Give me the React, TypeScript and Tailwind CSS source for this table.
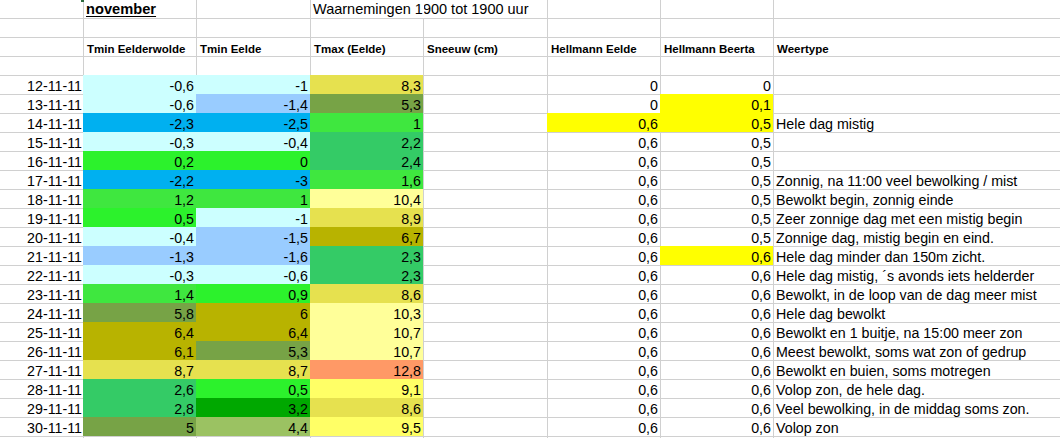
import React from 'react';

type Row = {
  date: string;
  b: string;
  c: string;
  d: string;
  f: string;
  g: string;
  h?: string;
  fYellow?: boolean;
  gYellow?: boolean;
};

const rows: Row[] = [
  { date: '12-11-11', b: '-0,6', c: '-1', d: '8,3', f: '0', g: '0' },
  { date: '13-11-11', b: '-0,6', c: '-1,4', d: '5,3', f: '0', g: '0,1', gYellow: true },
  { date: '14-11-11', b: '-2,3', c: '-2,5', d: '1', f: '0,6', g: '0,5', fYellow: true, gYellow: true, h: 'Hele dag mistig' },
  { date: '15-11-11', b: '-0,3', c: '-0,4', d: '2,2', f: '0,6', g: '0,5' },
  { date: '16-11-11', b: '0,2', c: '0', d: '2,4', f: '0,6', g: '0,5' },
  { date: '17-11-11', b: '-2,2', c: '-3', d: '1,6', f: '0,6', g: '0,5', h: 'Zonnig, na 11:00 veel bewolking / mist' },
  { date: '18-11-11', b: '1,2', c: '1', d: '10,4', f: '0,6', g: '0,5', h: 'Bewolkt begin, zonnig einde' },
  { date: '19-11-11', b: '0,5', c: '-1', d: '8,9', f: '0,6', g: '0,5', h: 'Zeer zonnige dag met een mistig begin' },
  { date: '20-11-11', b: '-0,4', c: '-1,5', d: '6,7', f: '0,6', g: '0,5', h: 'Zonnige dag, mistig begin en eind.' },
  { date: '21-11-11', b: '-1,3', c: '-1,6', d: '2,3', f: '0,6', g: '0,6', gYellow: true, h: 'Hele dag minder dan 150m zicht.' },
  { date: '22-11-11', b: '-0,3', c: '-0,6', d: '2,3', f: '0,6', g: '0,6', h: 'Hele dag mistig, \u00b4s avonds iets helderder' },
  { date: '23-11-11', b: '1,4', c: '0,9', d: '8,6', f: '0,6', g: '0,6', h: 'Bewolkt, in de loop van de dag meer mist' },
  { date: '24-11-11', b: '5,8', c: '6', d: '10,3', f: '0,6', g: '0,6', h: 'Hele dag bewolkt' },
  { date: '25-11-11', b: '6,4', c: '6,4', d: '10,7', f: '0,6', g: '0,6', h: 'Bewolkt en 1 buitje, na 15:00 meer zon' },
  { date: '26-11-11', b: '6,1', c: '5,3', d: '10,7', f: '0,6', g: '0,6', h: 'Meest bewolkt, soms wat zon of gedrup' },
  { date: '27-11-11', b: '8,7', c: '8,7', d: '12,8', f: '0,6', g: '0,6', h: 'Bewolkt en buien, soms motregen' },
  { date: '28-11-11', b: '2,6', c: '0,5', d: '9,1', f: '0,6', g: '0,6', h: 'Volop zon, de hele dag.' },
  { date: '29-11-11', b: '2,8', c: '3,2', d: '8,6', f: '0,6', g: '0,6', h: 'Veel bewolking, in de middag soms zon.' },
  { date: '30-11-11', b: '5', c: '4,4', d: '9,5', f: '0,6', g: '0,6', h: 'Volop zon' },
];

const GRID = 'border-[#d0d0d0]';
const YELLOW = 'bg-[#ffff00] border-[#ffff00]';

// conditional colour scale of the temperature columns
function tempFill(v: string): string {
  const t = parseFloat(v.replace(',', '.'));
  if (t < -2) return 'bg-[#00b0f0] border-[#00b0f0]';
  if (t < -1) return 'bg-[#99ccff] border-[#99ccff]';
  if (t < 0) return 'bg-[#ccffff] border-[#ccffff]';
  if (t < 1) return 'bg-[#2cf22c] border-[#2cf22c]';
  if (t < 2) return 'bg-[#3fe73f] border-[#3fe73f]';
  if (t < 3) return 'bg-[#34cb66] border-[#34cb66]';
  if (t < 4) return 'bg-[#00a800] border-[#00a800]';
  if (t < 5) return 'bg-[#9bc262] border-[#9bc262]';
  if (t < 6) return 'bg-[#77a346] border-[#77a346]';
  if (t < 8) return 'bg-[#b8b300] border-[#b8b300]';
  if (t < 9) return 'bg-[#e6e14f] border-[#e6e14f]';
  if (t < 10) return 'bg-[#ffff66] border-[#ffff66]';
  if (t < 12) return 'bg-[#ffff99] border-[#ffff99]';
  return 'bg-[#ff9966] border-[#ff9966]';
}

function Cell({ children, fill, className = '' }: { children?: React.ReactNode; fill?: string; className?: string }) {
  return (
    <div className={`h-[19px] border-l border-t whitespace-nowrap flex items-end ${fill ?? GRID} ${className}`}>
      {children}
    </div>
  );
}

function Num({ v, fill, pr = 'pr-[2px]' }: { v: string; fill?: string; pr?: string }) {
  return (
    <Cell fill={fill} className={`justify-end ${pr}`}>
      <span className="leading-[16px]">{v}</span>
    </Cell>
  );
}

function Head({ label }: { label: string }) {
  return (
    <Cell className="pl-[3px]">
      <span className="font-bold text-[11.5px] leading-[13px]">{label}</span>
    </Cell>
  );
}

function EmptyRow() {
  return (
    <>
      {Array.from({ length: 8 }).map((_, i) => (
        <Cell key={i} />
      ))}
    </>
  );
}

export default function App() {
  return (
    <div className="relative h-[438px] overflow-hidden bg-white text-black text-[14.25px] font-['Liberation_Sans',Arial,sans-serif]">
      <div className="-mt-px -ml-px grid grid-cols-[84px_113px_114px_113px_124px_113px_113px_1fr]">
        {/* title row */}
        <Cell />
        <Cell className="pl-[2px] items-start">
          <span className="font-bold text-[14.67px] underline underline-offset-2 leading-[16px] pt-px">november</span>
        </Cell>
        <Cell />
        <Cell className="pl-[2px] items-start">
          <span className="text-[14.5px] leading-[16px] pt-px">Waarnemingen 1900 tot 1900 uur</span>
        </Cell>
        <Cell fill="border-t-[#d0d0d0] border-l-white" />
        <Cell />
        <Cell />
        <Cell />

        <EmptyRow />

        {/* column headers */}
        <Cell />
        <Head label="Tmin Eelderwolde" />
        <Head label="Tmin Eelde" />
        <Head label="Tmax (Eelde)" />
        <Head label="Sneeuw (cm)" />
        <Head label="Hellmann Eelde" />
        <Head label="Hellmann Beerta" />
        <Head label="Weertype" />

        <EmptyRow />

        {rows.map((r) => (
          <React.Fragment key={r.date}>
            <Num v={r.date} pr="pr-px" />
            <Num v={r.b} fill={tempFill(r.b)} />
            <Num v={r.c} fill={tempFill(r.c)} />
            <Num v={r.d} fill={tempFill(r.d)} />
            <Cell />
            <Num v={r.f} fill={r.fYellow ? YELLOW : undefined} />
            <Num v={r.g} fill={r.gYellow ? YELLOW : undefined} />
            <Cell className="pl-[2px]">
              {r.h && <span className="leading-[16px]">{r.h}</span>}
            </Cell>
          </React.Fragment>
        ))}

        <EmptyRow />
      </div>
      {/* cell cursor corner peeking in at the top */}
      <span className="absolute left-[81px] top-0 w-[3px] h-[2px] bg-[#2d6a3e]" />
    </div>
  );
}
